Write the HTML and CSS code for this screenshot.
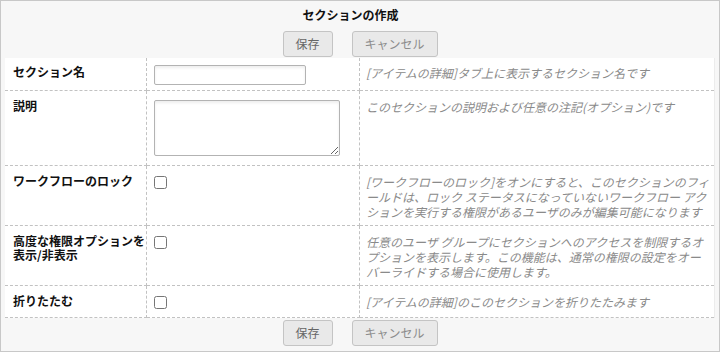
FILE: index.html
```html
<!DOCTYPE html>
<html lang="ja">
<head>
<meta charset="utf-8">
<title>セクションの作成</title>
<link rel="stylesheet" href="styles.css">
</head>
<body>
<div class="dialog">
  <div class="title">セクションの作成</div>
  <div class="actions top">
    <button class="btn save" type="button">保存</button>
    <button class="btn cancel" type="button">キャンセル</button>
  </div>
  <div class="form">
    <div class="row r1">
      <div class="cell label">セクション名</div>
      <div class="cell ctrl"><input class="text" type="text"></div>
      <div class="cell desc">[アイテムの詳細]タブ上に表示するセクション名です</div>
    </div>
    <div class="row r2">
      <div class="cell label">説明</div>
      <div class="cell ctrl"><textarea class="area"></textarea></div>
      <div class="cell desc">このセクションの説明および任意の注記(オプション)です</div>
    </div>
    <div class="row r3">
      <div class="cell label">ワークフローのロック</div>
      <div class="cell ctrl"><input class="check" type="checkbox"></div>
      <div class="cell desc">[ワークフローのロック]をオンにすると、このセクションのフィ<br>ールドは、ロック ステータスになっていないワークフロー アク<br>ションを実行する権限があるユーザのみが編集可能になります</div>
    </div>
    <div class="row r4">
      <div class="cell label">高度な権限オプションを<br>表示/非表示</div>
      <div class="cell ctrl"><input class="check" type="checkbox"></div>
      <div class="cell desc">任意のユーザ グループにセクションへのアクセスを制限するオ<br>プションを表示します。この機能は、通常の権限の設定をオー<br>バーライドする場合に使用します。</div>
    </div>
    <div class="row r5">
      <div class="cell label">折りたたむ</div>
      <div class="cell ctrl"><input class="check" type="checkbox"></div>
      <div class="cell desc">[アイテムの詳細]のこのセクションを折りたたみます</div>
    </div>
  </div>
  <div class="actions bottom">
    <button class="btn save" type="button">保存</button>
    <button class="btn cancel" type="button">キャンセル</button>
  </div>
</div>
</body>
</html>
```

FILE: styles.css
```css
* { box-sizing: border-box; }
html, body { margin: 0; padding: 0; background: #f7f7f7; }
body {
  font-family: "Noto Sans CJK JP", "Noto Sans", sans-serif;
  font-size: 12px;
  color: #111;
}
.dialog {
  width: 720px;
  height: 352px;
  border: 1px solid #c8c8c8;
  background: #f7f7f7;
  padding: 0 4px;
  overflow: hidden;
}
.title {
  text-align: center;
  font-weight: bold;
  line-height: 15px;
  padding: 6px 19px 0 0;
  height: 21px;
}
.actions {
  display: flex;
  justify-content: center;
  gap: 19px;
}
.actions.top { margin-top: 9px; margin-bottom: 1px; }
.actions.bottom { margin-top: 2px; }
.btn {
  height: 26px;
  padding: 0 12px;
  font-family: inherit;
  font-size: 12px;
  line-height: 24px;
  background: #e9e9e9;
  border: 1px solid #c4c4c4;
  border-radius: 3px;
  margin: 0;
}
.btn.save { width: 50px; color: #666; }
.btn.cancel { width: 86px; color: #8c8c8c; }

.form {
  background: #fff;
  width: 710px;
  border-right: 1px solid #ececec;
}
.row {
  display: grid;
  grid-template-columns: 142px 213px 1fr;
}
.cell {
  border-bottom: 1px dashed #c2c2c2;
  padding-top: 8px;
  padding-bottom: 8px;
}
.label {
  border-right: 1px dashed #c2c2c2;
  padding-left: 8px;
  padding-right: 0;
  font-weight: bold;
  line-height: 14px;
  color: #111;
}
.ctrl {
  border-right: 1px dashed #c2c2c2;
  padding-left: 7px;
}
.desc {
  padding-left: 6px;
  font-style: italic;
  color: #8a8a8a;
  line-height: 15px;
  white-space: nowrap;
}
.r1 .cell { padding-top: 7px; padding-bottom: 5px; }
.r3 .cell, .r4 .cell { padding-bottom: 6px; }

.text {
  display: block;
  width: 152px;
  height: 20px;
  margin: 0;
  border: 1px solid #b3b3b3;
  border-radius: 2px;
  box-shadow: inset 0 2px 3px rgba(0, 0, 0, 0.07);
  font-family: inherit;
  font-size: 12px;
  padding: 0 3px;
  background: #fff;
}
.area {
  display: block;
  width: 186px;
  height: 56px;
  margin: 1px 0;
  border: 1px solid #b3b3b3;
  border-radius: 2px;
  box-shadow: inset 0 2px 3px rgba(0, 0, 0, 0.07);
  font-family: inherit;
  font-size: 12px;
  padding: 2px 3px;
  background: #fff;
}
.check {
  display: block;
  width: 13px;
  height: 13px;
  margin: 2px 0 0 0;
}
```
